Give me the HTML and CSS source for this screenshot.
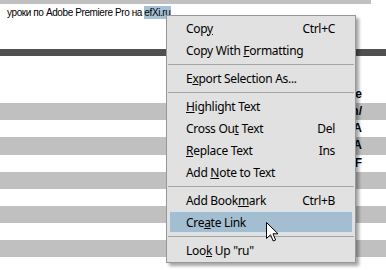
FILE: index.html
```html
<!DOCTYPE html>
<html lang="ru">
<head>
    <meta charset="UTF-8">
    <link rel="stylesheet" href="styles.css">
    <title>efXi.ru</title>
</head>
<body>
    <div class="top-strip"></div>
    <p class="intro">уроки по Adobe Premiere Pro на <span class="selected">efXi.ru</span></p>
    <div class="dark-bar"></div>

    <div class="rows">
        <div class="row">Adobe Premiere</div>
        <div class="row gray">Mac/Win/</div>
        <div class="row">DVA</div>
        <div class="row gray">DVA</div>
        <div class="row">PDF</div>
        <div class="row gray"></div>
        <div class="row"></div>
        <div class="row gray"></div>
        <div class="row"></div>
        <div class="row gray"></div>
    </div>

    <!-- context menu -->
    <div class="menu">
        <div class="item"><span>Cop<u>y</u></span><span>Ctrl+C</span></div>
        <div class="item"><span>Copy With <u>F</u>ormatting</span></div>
        <div class="sep"></div>
        <div class="item"><span>E<u>x</u>port Selection As...</span></div>
        <div class="sep"></div>
        <div class="item"><span><u>H</u>ighlight Text</span></div>
        <div class="item"><span>Cross Ou<u>t</u> Text</span><span>Del</span></div>
        <div class="item"><span><u>R</u>eplace Text</span><span>Ins</span></div>
        <div class="item"><span>Add <u>N</u>ote to Text</span></div>
        <div class="sep"></div>
        <div class="item"><span>Add Book<u>m</u>ark</span><span>Ctrl+B</span></div>
        <div class="item active"><span>Cre<u>a</u>te Link</span></div>
        <div class="sep"></div>
        <div class="item"><span>Loo<u>k</u> Up "ru"</span></div>
    </div>

    <svg class="cursor" width="13" height="20" viewBox="0 0 13 20">
        <path d="M0.5 0.5 L0.5 16.5 L4.5 12.8 L7.2 19 L9.6 18 L7 11.8 L12 11.8 Z" fill="#fff" stroke="#000" stroke-width="1" stroke-linejoin="miter"/>
    </svg>
</body>
</html>
```

FILE: styles.css
```css
body {
    margin: 0;
    background: #fff;
    font-family: "Liberation Sans", Arial, sans-serif;
    font-size: 11px;
    color: #000;
}

.top-strip {
    width: 371px;
    height: 4px;
    background: #c0c0c0;
}

.intro {
    margin: 2px 0 0 7px;
    font-size: 10px;
    letter-spacing: -0.4px;
    line-height: 13px;
}

.selected {
    background: #a6c0d7;
    padding: 1px 1px 1px 0;
}

.dark-bar {
    height: 7px;
    margin-top: 30px;
    background: #505050;
}

.rows {
    margin-top: 30px;
}

.row {
    height: 17.125px;
    line-height: 17px;
    text-align: right;
    padding-right: 24px;
    font-weight: bold;
    font-size: 12px;
}

.row.gray {
    background: #c0c0c0;
}

.menu {
    position: absolute;
    left: 166px;
    top: 15px;
    width: 184px;
    padding: 1px 2px;
    background: #e1e1e1;
    border: 1px solid #979797;
    box-shadow: 3px 3px 3px rgba(0, 0, 0, 0.35);
    font-family: "Noto Sans", "Open Sans", sans-serif;
    font-size: 12px;
    letter-spacing: -0.3px;
}

.item {
    display: flex;
    justify-content: space-between;
    align-items: center;
    height: 22px;
    padding: 0 17px 0 16px;
    box-sizing: border-box;
    border: 1px solid transparent;
}

.item.active {
    background: #a3bdd1;
    border-color: #d6e2ec;
}

.sep {
    height: 1px;
    margin: 3px -1px 2px -1px;
    background: #a5a5a5;
}

.cursor {
    position: absolute;
    left: 266px;
    top: 222px;
}
```
